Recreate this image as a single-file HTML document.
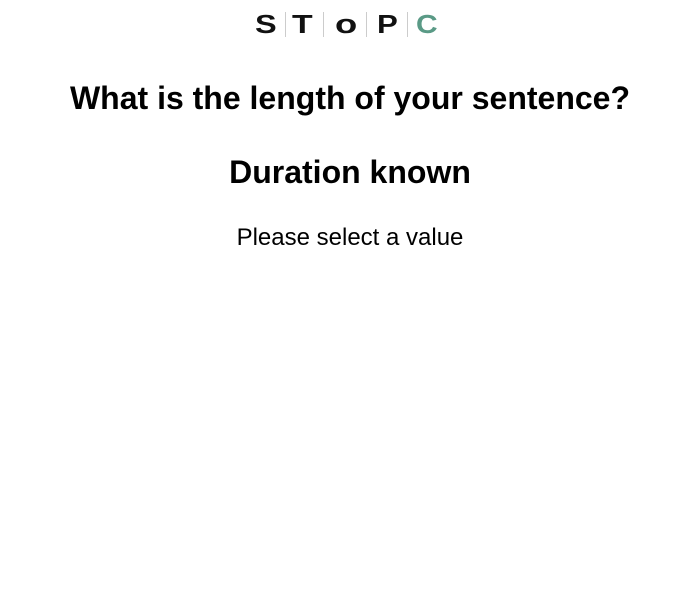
<!DOCTYPE html>
<html><head><style>
body{margin:0;width:700px;height:600px;background:#fff;font-family:"Liberation Sans",Arial,sans-serif;color:#000;}
.logo{position:absolute;top:0;left:0}
h1,h2,p{position:absolute;left:0;width:700px;text-align:center;margin:0;white-space:nowrap}
h1{top:80px;font-size:32px;font-weight:bold}
h2{top:154px;font-size:32px;font-weight:bold}
p{top:224px;font-size:24px}
</style></head><body>
<svg class="logo" width="700" height="50">
<g font-family="Liberation Sans" font-weight="bold" font-size="26">
<text x="0" y="33" transform="translate(255,0) scale(1.25,1)" fill="#111">S</text>
<text x="0" y="33" transform="translate(292,0) scale(1.3,1)" fill="#111">T</text>
<text x="0" y="33" transform="translate(335,0) scale(1.4,1)" fill="#111">o</text>
<text x="0" y="33" transform="translate(377,0) scale(1.2,1)" fill="#111">P</text>
<text x="0" y="33" transform="translate(416,0) scale(1.15,1)" fill="#5a9a86">C</text>
</g>
<g stroke="#ccc" stroke-width="1">
<line x1="285.5" y1="12" x2="285.5" y2="37"/>
<line x1="323.5" y1="12" x2="323.5" y2="37"/>
<line x1="366.5" y1="12" x2="366.5" y2="37"/>
<line x1="407.5" y1="12" x2="407.5" y2="37"/>
</g>
</svg>
<h1>What is the length of your sentence?</h1>
<h2>Duration known</h2>
<p>Please select a value</p>
</body></html>
